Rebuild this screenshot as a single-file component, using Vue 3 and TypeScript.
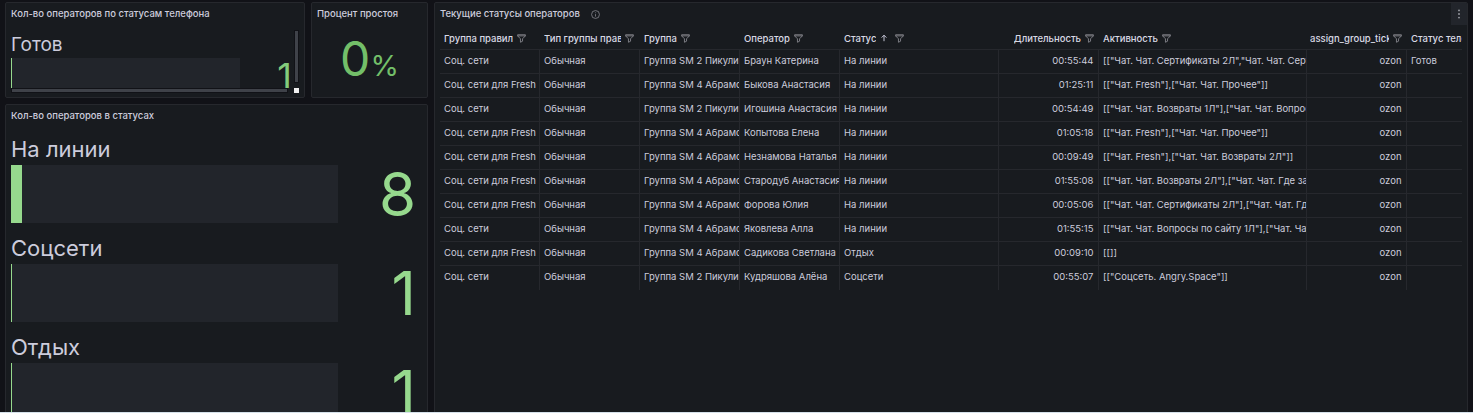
<script setup lang="ts">
interface Row {
  rules: string;
  group: string;
  operator: string;
  status: string;
  time: string;
  activity: string;
  phone?: string;
}

const fresh = "Соц. сети для Fresh";
const social = "Соц. сети";
const sm2 = "Группа SM 2 Пикулина";
const sm4 = "Группа SM 4 Абрамова";

const columns = [
  { title: "Группа правил" },
  { title: "Тип группы правил" },
  { title: "Группа" },
  { title: "Оператор" },
  { title: "Статус", sorted: true },
  { title: "Длительность", right: true },
  { title: "Активность" },
  { title: "assign_group_ticket", right: true },
  { title: "Статус телефона", noFilter: true },
];

const rows: Row[] = [
  { rules: social, group: sm2, operator: "Браун Катерина", status: "На линии", time: "00:55:44", activity: '[["Чат. Чат. Сертификаты 2Л","Чат. Чат. Сертификаты 1Л"]]', phone: "Готов" },
  { rules: fresh, group: sm4, operator: "Быкова Анастасия", status: "На линии", time: "01:25:11", activity: '[["Чат. Fresh"],["Чат. Чат. Прочее"]]' },
  { rules: social, group: sm2, operator: "Игошина Анастасия", status: "На линии", time: "00:54:49", activity: '[["Чат. Чат. Возвраты 1Л"],["Чат. Чат. Вопросы по сайту"]]' },
  { rules: fresh, group: sm4, operator: "Копытова Елена", status: "На линии", time: "01:05:18", activity: '[["Чат. Fresh"],["Чат. Чат. Прочее"]]' },
  { rules: fresh, group: sm4, operator: "Незнамова Наталья", status: "На линии", time: "00:09:49", activity: '[["Чат. Fresh"],["Чат. Чат. Возвраты 2Л"]]' },
  { rules: fresh, group: sm4, operator: "Стародуб Анастасия", status: "На линии", time: "01:55:08", activity: '[["Чат. Чат. Возвраты 2Л"],["Чат. Чат. Где заказ"]]' },
  { rules: fresh, group: sm4, operator: "Форова Юлия", status: "На линии", time: "00:05:06", activity: '[["Чат. Чат. Сертификаты 2Л"],["Чат. Чат. Где заказ"]]' },
  { rules: social, group: sm4, operator: "Яковлева Алла", status: "На линии", time: "01:55:15", activity: '[["Чат. Чат. Вопросы по сайту 1Л"],["Чат. Чат. Прочее"]]' },
  { rules: fresh, group: sm4, operator: "Садикова Светлана", status: "Отдых", time: "00:09:10", activity: "[[]]" },
  { rules: social, group: sm2, operator: "Кудряшова Алёна", status: "Соцсети", time: "00:55:07", activity: '[["Соцсеть. Angry.Space"]]' },
];

const gauges = [
  { label: "На линии", value: 8, width: 11 },
  { label: "Соцсети", value: 1, width: 1 },
  { label: "Отдых", value: 1, width: 1 },
];
</script>

<template>
  <div class="page">
    <div class="left">
      <div class="top">
        <section class="panel phone">
          <h2 class="title">Кол-во операторов по статусам телефона</h2>
          <div class="phone-body">
            <div class="phone-main">
              <div class="phone-label">Готов</div>
              <div class="phone-row">
                <div class="phone-track"><div class="phone-fill"></div></div>
                <div class="phone-value">1</div>
              </div>
            </div>
            <div class="scroll-v"></div>
            <div class="scroll-h"></div>
            <div class="scroll-corner"></div>
          </div>
        </section>
        <section class="panel idle">
          <h2 class="title">Процент простоя</h2>
          <div class="idle-value">0<span class="idle-unit">%</span></div>
        </section>
      </div>
      <section class="panel statuses">
        <h2 class="title">Кол-во операторов в статусах</h2>
        <div class="gauges">
          <div v-for="g in gauges" :key="g.label" class="gauge">
            <div class="gauge-label">{{ g.label }}</div>
            <div class="gauge-row">
              <div class="gauge-track">
                <div class="gauge-fill" :style="{ width: g.width + 'px' }"></div>
              </div>
              <div class="gauge-value">{{ g.value }}</div>
            </div>
          </div>
        </div>
      </section>
    </div>

    <section class="panel current">
      <div class="current-head">
        <h2 class="title">Текущие статусы операторов</h2>
        <svg class="info" viewBox="0 0 24 24" width="9" height="9" fill="none" stroke="currentColor" stroke-width="2">
          <circle cx="12" cy="12" r="10.5" />
          <path d="M12 11v6.5M12 6.5v2" />
        </svg>
        <button class="menu" type="button">
          <svg viewBox="0 0 4 12" width="4" height="12" fill="currentColor">
            <circle cx="2" cy="2.4" r="0.9" />
            <circle cx="2" cy="6" r="0.9" />
            <circle cx="2" cy="9.6" r="0.9" />
          </svg>
        </button>
      </div>
      <div class="table-wrap">
        <table class="ops">
          <colgroup>
            <col class="c99" />
            <col class="c100" />
            <col class="c100" />
            <col class="c100" />
            <col class="c159" />
            <col class="c100" />
            <col class="c208" />
            <col class="c100" />
            <col class="c56" />
          </colgroup>
          <thead>
            <tr>
              <th v-for="c in columns" :key="c.title" :class="{ right: c.right }">
                <div class="th-inner">
                  <span class="th-text">{{ c.title }}</span>
                  <svg v-if="c.sorted" class="sort" viewBox="0 0 10 10" width="8" height="8" fill="none" stroke="currentColor" stroke-width="1.2">
                    <path d="M5 9V1.5M2 4.5l3-3 3 3" />
                  </svg>
                  <svg v-if="!c.noFilter" class="funnel" viewBox="0 0 12 12" width="9" height="9" fill="none" stroke="currentColor" stroke-width="1.1">
                    <path d="M.8 1h10.4v1.5L7.4 6.4v3.2L4.6 11V6.4L.8 2.5zM.8 2.5h10.4" />
                  </svg>
                </div>
              </th>
            </tr>
          </thead>
          <tbody>
            <tr v-for="r in rows" :key="r.operator">
              <td>{{ r.rules }}</td>
              <td>Обычная</td>
              <td>{{ r.group }}</td>
              <td>{{ r.operator }}</td>
              <td>{{ r.status }}</td>
              <td class="right">{{ r.time }}</td>
              <td>{{ r.activity }}</td>
              <td class="right">ozon</td>
              <td>{{ r.phone }}</td>
            </tr>
          </tbody>
        </table>
      </div>
    </section>
  </div>
</template>

<style>
html,
body {
  background: #d5e1ea;
  overflow: hidden;
}
</style>

<style scoped>
.page {
  display: flex;
  gap: 6px;
  box-sizing: border-box;
  width: 1473px;
  height: 412px;
  padding: 2px 5px 0 5px;
  background: #111217;
  color: #ccccdc;
  font-family: Inter, "Noto Sans", sans-serif;
  overflow: hidden;
}
.left {
  display: flex;
  flex-direction: column;
  gap: 6px;
  width: 423px;
  height: 420px;
  flex: none;
}
.top {
  display: flex;
  gap: 6px;
  height: 96px;
  flex: none;
}
.panel {
  box-sizing: border-box;
  background: #181b1f;
  border: 1px solid #26282d;
  border-radius: 2px;
  overflow: hidden;
}
.title {
  margin: 0;
  font-size: 9.5px;
  font-weight: 500;
  line-height: 12px;
  color: #ccccdc;
  white-space: nowrap;
}
.phone {
  width: 300px;
  padding: 5px 5px 0;
  flex: none;
}
.phone-body {
  display: grid;
  grid-template-columns: 283px 5px;
  grid-template-rows: 68px 6px;
}
.phone-main {
  height: 68px;
  overflow: hidden;
}
.phone-label {
  font-size: 19px;
  line-height: 22px;
  margin-top: 14px;
}
.phone-row {
  display: flex;
  align-items: flex-start;
  justify-content: space-between;
  margin-top: 2px;
}
.phone-track {
  width: 229px;
  height: 30px;
  background: #22252b;
}
.phone-fill {
  width: 1px;
  height: 30px;
  background: #96d98d;
}
.phone-value {
  font-size: 36px;
  line-height: 40px;
  margin-top: -2px;
  padding-right: 2px;
  color: #84cc7c;
}
.scroll-v {
  height: 53px;
  margin-top: 10px;
  background: #3f4249;
  border: 1px solid #111217;
  box-sizing: border-box;
}
.scroll-h {
  width: 277px;
  height: 5px;
  background: #3f4249;
  border: 1px solid #111217;
  box-sizing: border-box;
}
.scroll-corner {
  height: 5px;
  background: #f0f0f0;
}
.idle {
  flex: 1;
  padding: 5px 5px 0;
}
.idle-value {
  text-align: center;
  font-size: 48px;
  line-height: 60px;
  margin-top: 9px;
  color: #73bf69;
}
.idle-unit {
  font-size: 29px;
}
.statuses {
  flex: 1;
  min-height: 0;
  padding: 5px 5px 0;
}
.gauges {
  margin-top: 12px;
  display: flex;
  flex-direction: column;
  gap: 10px;
}
.gauge-label {
  font-size: 22px;
  line-height: 30px;
  color: #ccccdc;
}
.gauge-row {
  display: flex;
  align-items: center;
  margin-top: 1px;
}
.gauge-track {
  width: 327px;
  height: 58px;
  background: #22252b;
}
.gauge-fill {
  height: 100%;
  background: #96d98d;
}
.gauge-value {
  flex: 1;
  text-align: right;
  font-size: 60px;
  line-height: 58px;
  color: #96d98d;
  padding-right: 6px;
}
.current {
  flex: 1;
  min-width: 0;
  height: 420px;
  padding: 0 5px;
}
.current-head {
  display: flex;
  align-items: center;
  gap: 11px;
  height: 22px;
  position: relative;
}
.info {
  color: #8e8e95;
  flex: none;
}
.menu {
  position: absolute;
  right: -5px;
  top: 0;
  width: 16px;
  height: 22px;
  display: flex;
  align-items: center;
  justify-content: center;
  padding: 0;
  border: 0;
  background: #22252b;
  color: #9fa1a8;
}
.table-wrap {
  width: 1022px;
  overflow: hidden;
}
.ops {
  table-layout: fixed;
  border-collapse: separate;
  border-spacing: 0;
  width: 1022px;
  font-size: 9.5px;
  color: #ccccdc;
}
.c99 {
  width: 99px;
}
.c100 {
  width: 100px;
}
.c159 {
  width: 159px;
}
.c208 {
  width: 208px;
}
.c56 {
  width: 56px;
}
th {
  height: 25px;
  padding: 2px 5px 0 5px;
  font-weight: 500;
  border-bottom: 1px solid #26282d;
  overflow: hidden;
  box-sizing: border-box;
  color: #d8d9e4;
}
th:first-child {
  padding-left: 4px;
}
th:last-child {
  padding-right: 0;
}
th.right {
  padding-left: 4px;
  padding-right: 4px;
}
.th-inner {
  display: flex;
  align-items: center;
  gap: 4px;
  white-space: nowrap;
  overflow: hidden;
}
th.right .th-inner {
  justify-content: flex-end;
}
.th-text {
  overflow: hidden;
  min-width: 0;
}
.funnel {
  flex: none;
  color: #8e8e95;
}
.sort {
  flex: none;
  margin-right: 3px;
  color: #ccccdc;
}
td {
  height: 24px;
  padding: 0 0 2px 4px;
  white-space: nowrap;
  overflow: hidden;
  box-sizing: border-box;
  border-bottom: 1px solid #26282d;
  border-left: 1px solid #26282d;
}
td:first-child {
  border-left: 0;
}
tbody tr:last-child td {
  border-bottom: 0;
  padding-bottom: 3px;
}
td.right {
  text-align: right;
  padding-right: 4.5px;
}
</style>
